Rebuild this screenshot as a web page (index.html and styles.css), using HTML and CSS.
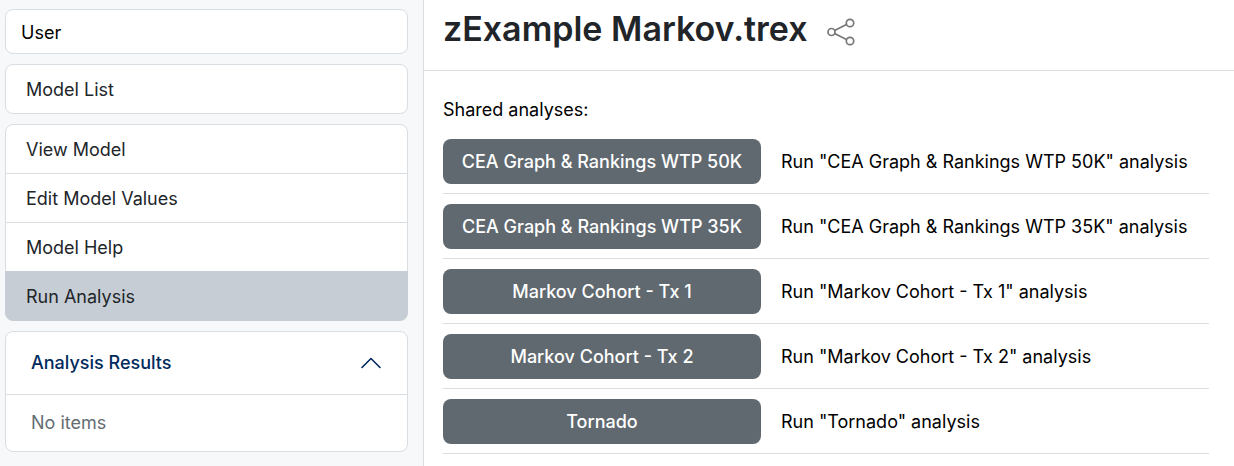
FILE: index.html
```html
<!DOCTYPE html>
<html lang="en">
<head>
  <meta charset="UTF-8">
  <meta name="viewport" content="width=device-width, initial-scale=1.0">
  <title>zExample Markov.trex</title>
  <link rel="stylesheet" href="styles.css">
</head>
<body>
  <aside class="sidebar">
    <div class="box user">User</div>

    <nav class="menu">
      <a href="#">Model List</a>
    </nav>

    <nav class="menu">
      <a href="#">View Model</a>
      <a href="#">Edit Model Values</a>
      <a href="#">Model Help</a>
      <a href="#" class="active">Run Analysis</a>
    </nav>

    <section class="box results">
      <button type="button" class="results-toggle" aria-expanded="true">
        Analysis Results
        <svg class="chevron" viewBox="0 0 22 22" aria-hidden="true">
          <path d="M2 15.5 11 6.5l9 9"/>
        </svg>
      </button>
      <p class="results-empty">No items</p>
    </section>
  </aside>

  <main class="content">
    <header class="title-bar">
      <h1>zExample Markov.trex</h1>
      <button type="button" class="share" aria-label="Share">
        <svg viewBox="0 0 28 28" aria-hidden="true">
          <path d="M7.5 12.5 19.5 6.5M7.5 15.5l12 6"/>
          <circle cx="4.5" cy="14" r="3.5"/>
          <circle cx="23" cy="5" r="3.7"/>
          <circle cx="23" cy="23" r="3.7"/>
        </svg>
      </button>
    </header>

    <div class="analyses">
      <p class="label">Shared analyses:</p>
      <table>
        <tr>
          <td class="run"><button type="button">CEA Graph &amp; Rankings WTP 50K</button></td>
          <td>Run "CEA Graph &amp; Rankings WTP 50K" analysis</td>
        </tr>
        <tr>
          <td class="run"><button type="button">CEA Graph &amp; Rankings WTP 35K</button></td>
          <td>Run "CEA Graph &amp; Rankings WTP 35K" analysis</td>
        </tr>
        <tr>
          <td class="run"><button type="button">Markov Cohort - Tx 1</button></td>
          <td>Run "Markov Cohort - Tx 1" analysis</td>
        </tr>
        <tr>
          <td class="run"><button type="button">Markov Cohort - Tx 2</button></td>
          <td>Run "Markov Cohort - Tx 2" analysis</td>
        </tr>
        <tr>
          <td class="run"><button type="button">Tornado</button></td>
          <td>Run "Tornado" analysis</td>
        </tr>
      </table>
    </div>
  </main>
</body>
</html>
```

FILE: styles.css
```css
* {
  box-sizing: border-box;
}
body {
  display: flex;
  min-height: 100vh;
  margin: 0;
  font-family: Inter, "Liberation Sans", sans-serif;
  font-size: 18px;
  line-height: 28px;
  color: #000;
  background-color: #fff;
}
h1, p {
  margin: 0;
}
button {
  font: inherit;
  border: none;
  cursor: pointer;
}

/* sidebar */
.sidebar {
  display: flex;
  flex-direction: column;
  gap: 10px;
  flex: 0 0 424px;
  padding: 9px 15px 9px 5px;
  background-color: #f7f8fa;
  border-right: 1px solid #d8dee2;
}
.box {
  background-color: #fff;
  border: 1px solid #d8dee2;
  border-radius: 8px;
  overflow: hidden;
}
.user {
  padding: 9px 15px 6px;
}
.menu a {
  display: block;
  padding: 11px 20px 9px;
  color: #212529;
  text-decoration: none;
  background-color: #fff;
  border: 1px solid #d8dee2;
}
.menu a + a {
  margin-top: -1px;
}
.menu a:first-child {
  border-top-left-radius: 8px;
  border-top-right-radius: 8px;
}
.menu a:last-child {
  border-bottom-left-radius: 8px;
  border-bottom-right-radius: 8px;
}
.menu .active {
  background-color: #c7cdd4;
  border-color: #c7cdd4;
}
.results-toggle {
  display: flex;
  align-items: center;
  justify-content: space-between;
  width: 100%;
  padding: 17px 25px;
  font-weight: 500;
  color: #002a5c;
  background: none;
}
.chevron {
  width: 22px;
  height: 22px;
  fill: none;
  stroke: #002a5c;
  stroke-width: 1.6;
  stroke-linecap: round;
  stroke-linejoin: round;
}
.results-empty {
  padding: 14px 25px;
  color: #646d73;
  border-top: 1px solid #d8dee2;
}

/* main area */
.content {
  flex: 1;
  min-width: 0;
}
.title-bar {
  display: flex;
  align-items: center;
  gap: 19px;
  padding: 5px 19px 17px;
  border-bottom: 1px solid #d8dee2;
}
.title-bar h1 {
  font-size: 34px;
  font-weight: 600;
  line-height: 48px;
  color: #212529;
}
.share {
  padding: 6px 0 0;
  background: none;
}
.share svg {
  display: block;
  width: 28px;
  height: 28px;
  fill: none;
  stroke: #777;
  stroke-width: 1.7;
}
.analyses {
  padding: 25px 25px 10px 19px;
}
.label {
  padding-bottom: 5px;
}
table {
  width: 100%;
  border-spacing: 0;
}
td {
  padding: 10px 0 9px;
  border-bottom: 1px solid #d8dee2;
}
.run {
  width: 338px;
  padding-right: 20px;
}
.run button {
  display: block;
  width: 100%;
  height: 45px;
  padding: 0 10px;
  font-weight: 500;
  color: #fff;
  background-color: #60696f;
  border-radius: 8px;
}
```
